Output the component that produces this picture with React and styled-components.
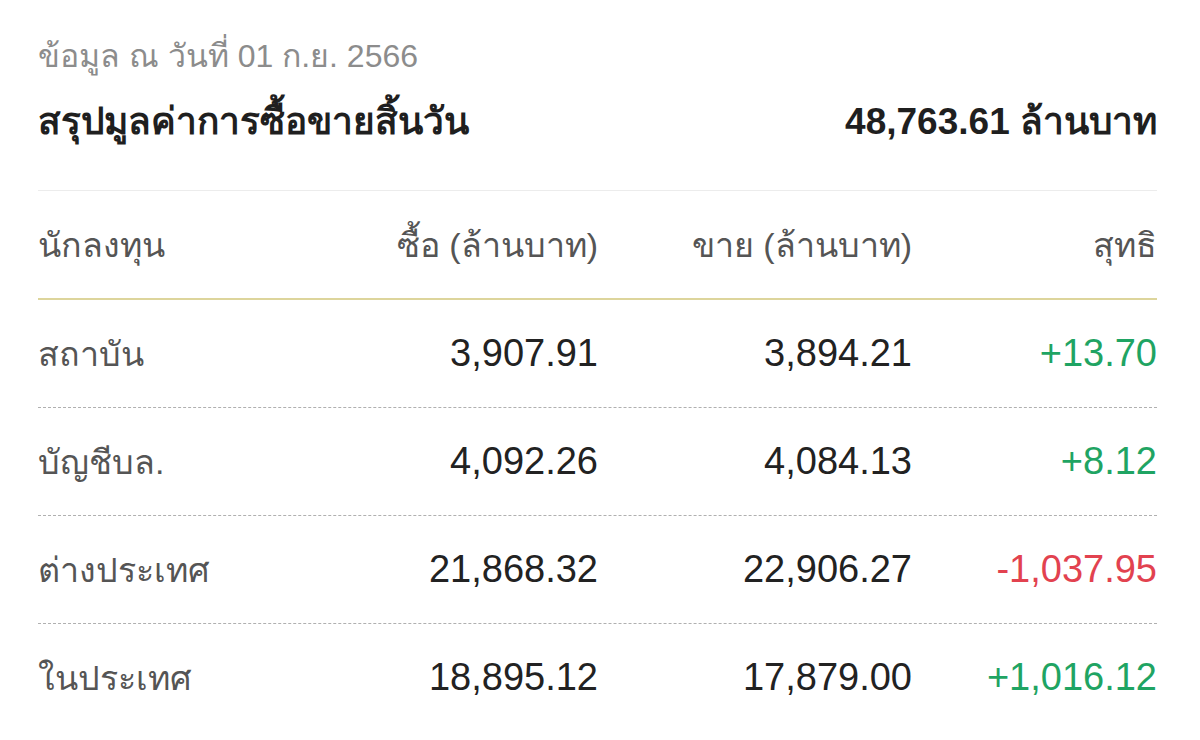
import React from 'react';
import styled, { createGlobalStyle } from 'styled-components';

const rows = [
  { name: 'สถาบัน', buy: '3,907.91', sell: '3,894.21', net: '+13.70' },
  { name: 'บัญชีบล.', buy: '4,092.26', sell: '4,084.13', net: '+8.12' },
  { name: 'ต่างประเทศ', buy: '21,868.32', sell: '22,906.27', net: '-1,037.95' },
  { name: 'ในประเทศ', buy: '18,895.12', sell: '17,879.00', net: '+1,016.12' },
];

export default function App() {
  return (
    <>
      <GlobalStyle />
      <Page>
        <DateLine>ข้อมูล ณ วันที่ 01 ก.ย. 2566</DateLine>
        <Summary>
          <Title>สรุปมูลค่าการซื้อขายสิ้นวัน</Title>
          <Total>48,763.61 ล้านบาท</Total>
        </Summary>
        <Table>
          <HeadRow>
            <HeadCell>นักลงทุน</HeadCell>
            <HeadCell right>ซื้อ (ล้านบาท)</HeadCell>
            <HeadCell right>ขาย (ล้านบาท)</HeadCell>
            <HeadCell right>สุทธิ</HeadCell>
          </HeadRow>
          {rows.map((r) => (
            <Row key={r.name}>
              <Label>{r.name}</Label>
              <Num>{r.buy}</Num>
              <Num>{r.sell}</Num>
              <Net negative={r.net.startsWith('-')}>{r.net}</Net>
            </Row>
          ))}
        </Table>
      </Page>
    </>
  );
}

const GlobalStyle = createGlobalStyle`
  body {
    margin: 0;
    background: #fff;
    font-family: "Liberation Sans", Arial, sans-serif;
  }
`;

const Page = styled.div`
  width: 1200px;
  padding: 34px 43px 0 38px;
  box-sizing: border-box;
`;

const DateLine = styled.div`
  font-size: 32px;
  line-height: 44px;
  color: #8c8c8c;
`;

const Summary = styled.div`
  display: flex;
  justify-content: space-between;
  align-items: center;
  height: 50px;
  padding: 17px 0 45px;
  border-bottom: 1px solid #ececec;
`;

const Title = styled.div`
  font-size: 37px;
  font-weight: 600;
  color: #1f1f1f;
`;

const Total = styled.div`
  font-size: 37px;
  font-weight: 600;
  color: #1f1f1f;
`;

const Table = styled.div`
  display: flex;
  flex-direction: column;
`;

const grid = `
  display: grid;
  grid-template-columns: 1fr 300px 314px 245px;
  align-items: center;
`;

const HeadRow = styled.div`
  ${grid}
  height: 107px;
  border-bottom: 2px solid #ddd59c;
`;

const HeadCell = styled.div`
  font-size: 34px;
  color: #555;
  text-align: ${({ right }) => (right ? 'right' : 'left')};
`;

const Row = styled.div`
  ${grid}
  height: 107px;
  border-bottom: 1px dashed #b0b0b0;

  &:last-child {
    border-bottom: none;
  }
`;

const Label = styled.div`
  font-size: 34px;
  color: #555;
`;

const Num = styled.div`
  font-size: 38px;
  color: #222;
  text-align: right;
`;

const Net = styled(Num)`
  color: ${({ negative }) => (negative ? '#e2424f' : '#1fa463')};
`;
